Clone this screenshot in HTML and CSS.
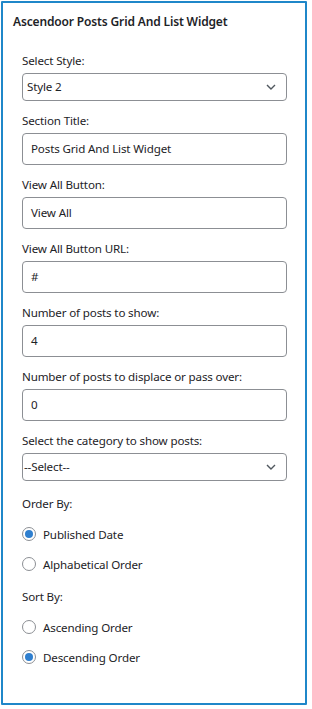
FILE: index.html
```html
<!DOCTYPE html>
<html lang="en">
<head>
  <meta charset="UTF-8" />
  <meta name="viewport" content="width=device-width, initial-scale=1.0"/>
  <title>Ascendoor Posts Grid And List Widget</title>
  <link rel="stylesheet" href="styles.css">
</head>
<body>
  <div class="widget">
    <h3 class="widget-title">Ascendoor Posts Grid And List Widget</h3>

    <div class="widget-body">
      <div class="field">
        <label>Select Style:</label>
        <div class="select">
          <span>Style 2</span>
          <svg width="10" height="6" viewBox="0 0 10 6"><path d="M1 1l4 4 4-4" fill="none" stroke="#50575e" stroke-width="1.4"/></svg>
        </div>
      </div>

      <div class="field">
        <label>Section Title:</label>
        <div class="input">Posts Grid And List Widget</div>
      </div>

      <div class="field">
        <label>View All Button:</label>
        <div class="input">View All</div>
      </div>

      <div class="field">
        <label>View All Button URL:</label>
        <div class="input">#</div>
      </div>

      <div class="field">
        <label>Number of posts to show:</label>
        <div class="input">4</div>
      </div>

      <div class="field">
        <label>Number of posts to displace or pass over:</label>
        <div class="input">0</div>
      </div>

      <div class="field">
        <label>Select the category to show posts:</label>
        <div class="select tight">
          <span>--Select--</span>
          <svg width="10" height="6" viewBox="0 0 10 6"><path d="M1 1l4 4 4-4" fill="none" stroke="#50575e" stroke-width="1.4"/></svg>
        </div>
      </div>

      <div class="group">
        <label>Order By:</label>
        <div class="radio checked"><span class="dot"></span>Published Date</div>
        <div class="radio"><span class="dot"></span>Alphabetical Order</div>
      </div>

      <div class="group">
        <label>Sort By:</label>
        <div class="radio"><span class="dot"></span>Ascending Order</div>
        <div class="radio checked"><span class="dot"></span>Descending Order</div>
      </div>
    </div>
  </div>
</body>
</html>
```

FILE: styles.css
```css
body {
  font-family: 'Noto Sans', sans-serif;
  background: #fff;
  color: #1d2327;
  margin: 0;
  padding: 0;
  letter-spacing: -0.15px;
}

.widget {
  margin: 1px;
  width: 306px;
  height: 704px;
  box-sizing: border-box;
  border: 2px solid #1f87c9;
  border-radius: 1px;
}

.widget-title {
  margin: 0;
  padding: 10px 10px 0;
  font-size: 12px;
  font-weight: 600;
  line-height: 18px;
}

.widget-body {
  padding: 22px 18px 0 19px;
}

label {
  display: block;
  font-size: 11.6px;
  line-height: 16px;
  margin-bottom: 4px;
}

.field {
  margin-bottom: 12px;
}

.input, .select {
  box-sizing: border-box;
  height: 32px;
  border: 1px solid #8c8f94;
  border-radius: 4px;
  font-size: 11.6px;
  line-height: 30px;
  padding: 0 8px;
}

.select {
  height: 28px;
  line-height: 26px;
  padding: 0 10px 0 4px;
  display: flex;
  justify-content: space-between;
  align-items: center;
}

.select.tight {
  padding-left: 1px;
}

.group {
  margin-top: 15px;
}

.group label {
  margin-bottom: 7px;
}

.radio {
  display: flex;
  align-items: center;
  height: 30px;
  font-size: 11.6px;
}

.radio .dot {
  width: 14px;
  height: 14px;
  box-sizing: border-box;
  border: 1px solid #8c8f94;
  border-radius: 50%;
  margin-right: 7px;
  display: flex;
  align-items: center;
  justify-content: center;
}

.radio.checked .dot::after {
  content: '';
  width: 8px;
  height: 8px;
  border-radius: 50%;
  background: #2f7fcf;
}

.group + .group {
  margin-top: 10px;
}
```
